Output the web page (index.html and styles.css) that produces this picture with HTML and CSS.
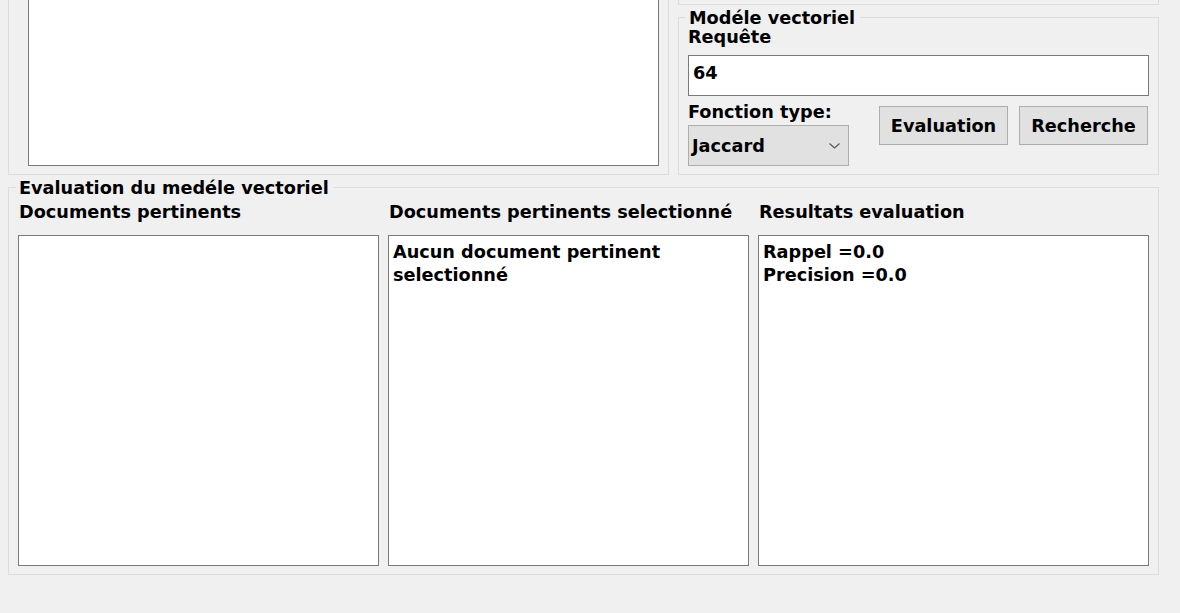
FILE: index.html
```html
<!DOCTYPE html>
<html lang="fr">
<head>
<meta charset="utf-8">
<title>Modèle vectoriel</title>
<link rel="stylesheet" href="styles.css">
</head>
<body>
<div class="app">
  <div class="top-row">
    <div class="group left-group">
      <div class="textarea big"></div>
    </div>
    <div class="right-col">
      <div class="group stub"></div>
      <fieldset class="group model">
        <legend>Modéle vectoriel</legend>
        <div class="label first">Requête</div>
        <div class="input">64</div>
        <div class="controls">
          <div class="fn">
            <div class="label">Fonction type:</div>
            <div class="select">
              <span>Jaccard</span>
              <svg class="chev" width="11" height="6" viewBox="0 0 11 6"><polyline points="0.5,0.5 5.5,5 10.5,0.5" fill="none" stroke="#555" stroke-width="1.1"/></svg>
            </div>
          </div>
          <button class="btn">Evaluation</button>
          <button class="btn">Recherche</button>
        </div>
      </fieldset>
    </div>
  </div>
  <fieldset class="group eval">
    <legend>Evaluation du medéle vectoriel</legend>
    <div class="cols">
      <div class="col c1">
        <div class="label">Documents pertinents</div>
        <div class="textarea"></div>
      </div>
      <div class="col c2">
        <div class="label">Documents pertinents selectionné</div>
        <div class="textarea">Aucun document pertinent<br>selectionné</div>
      </div>
      <div class="col c3">
        <div class="label">Resultats evaluation</div>
        <div class="textarea">Rappel =0.0<br>Precision =0.0</div>
      </div>
    </div>
  </fieldset>
</div>
</body>
</html>
```

FILE: styles.css
```css
* { box-sizing: border-box; }
html, body {
  margin: 0;
  padding: 0;
  background: #f0f0f0;
  overflow: hidden;
}
body {
  font-family: "DejaVu Sans", Verdana, sans-serif;
  font-weight: bold;
  font-size: 17.7px;
  color: #000;
}
.app {
  padding: 0 0 0 8px;
  width: 1159px;
}
.top-row {
  display: flex;
  margin-top: -20px;
  height: 195px;
}
.group {
  border: 1px solid #dcdcdc;
  margin: 0;
  min-width: 0;
}
.left-group {
  width: 661px;
  height: 195px;
  padding: 0 9px 8px 19px;
  display: flex;
  flex-direction: column;
  justify-content: flex-end;
}
.textarea {
  background: #fff;
  border: 1px solid #7a7a7a;
  line-height: 23px;
  padding: 5px 4px;
}
.big {
  width: 631px;
  height: 186px;
}
.right-col {
  margin-left: 9px;
  width: 481px;
  display: flex;
  flex-direction: column;
}
.stub {
  height: 25px;
}
legend {
  line-height: 20px;
  padding: 1px 5px 0 3px;
  margin-left: -2px;
}
.model {
  margin-top: 2px;
  height: 168px;
  padding: 0 9px 8px 9px;
}
.label {
  line-height: 20px;
  white-space: nowrap;
}
.label.first {
  margin-top: -1px;
}
.input {
  margin-top: 8px;
  height: 41px;
  background: #fff;
  border: 1px solid #7a7a7a;
  line-height: 35px;
  padding: 0 4px 4px;
}
.controls {
  margin-top: 6px;
  display: flex;
  align-items: flex-start;
}
.fn {
  width: 161px;
  margin-right: 30px;
}
.select {
  margin-top: 3px;
  height: 41px;
  background: #e1e1e1;
  border: 1px solid #adadad;
  display: flex;
  align-items: flex-start;
  justify-content: space-between;
  padding: 2px 8px 0 3px;
  line-height: 37px;
}
.chev {
  margin-top: 15px;
}
.btn {
  font: inherit;
  color: #000;
  margin: 4px 0 0 0;
  width: 129px;
  height: 39px;
  background: #e1e1e1;
  border: 1px solid #adadad;
  border-radius: 0;
  padding: 2px 0 0 0;
  line-height: 35px;
  text-align: center;
}
.btn + .btn {
  margin-left: 11px;
}
.eval {
  margin-top: 2px;
  width: 1151px;
  padding: 4px 9px 8px 9px;
}
.cols {
  display: flex;
  gap: 9px;
}
.col .label {
  padding-left: 1px;
}
.col .textarea {
  margin-top: 13px;
  height: 331px;
}
.c1, .c2 { width: 361px; }
.c3 { width: 391px; }
```
